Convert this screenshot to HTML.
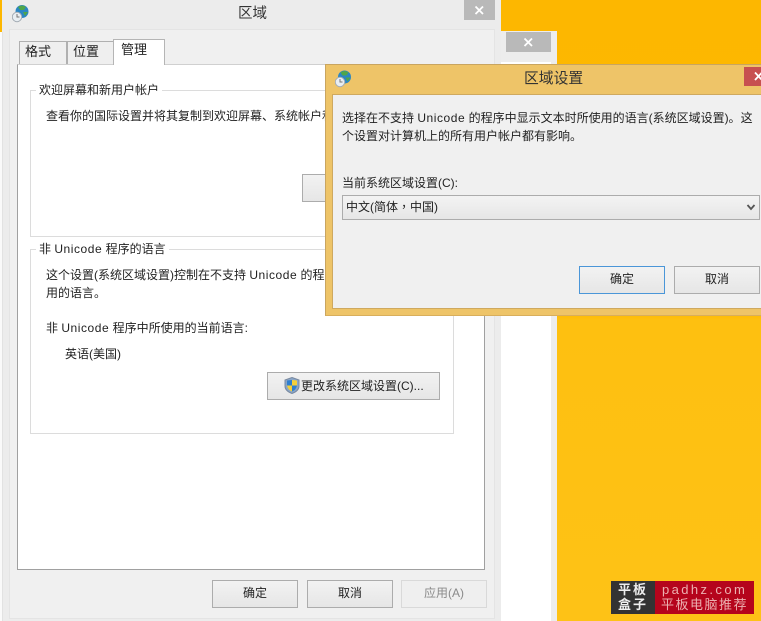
<!DOCTYPE html>
<html><head><meta charset="utf-8"><style>
html,body{margin:0;padding:0}
body{width:761px;height:621px;overflow:hidden;position:relative;background:linear-gradient(180deg,#fdb700 0,#fdb900 312px,#fec010 320px,#fec216 621px);font-family:"Liberation Sans","Noto Sans CJK SC",sans-serif;font-size:12px;color:#222}
div,span,svg{position:absolute;box-sizing:border-box}
b{font-weight:normal;letter-spacing:.55px}
i{font-style:normal;font-family:"Noto Sans CJK TC",sans-serif}
.t{white-space:nowrap;line-height:16px;height:16px}
.btn{background:linear-gradient(#f2f2f2,#e6e6e6);border:1px solid #acacac;text-align:center;line-height:25px;color:#222}
</style></head><body>
<!-- second window behind -->
<div style="left:501px;top:31px;width:56px;height:590px;background:#ededed"></div>
<div style="left:506px;top:32px;width:45px;height:20px;background:#b9b9b9"></div>
<svg style="left:522px;top:36px" width="13" height="13" viewBox="0 0 13 13"><path d="M2.500 2.500L10 10M10 2.500L2.500 10" stroke="#fff" stroke-width="1.800"/></svg>
<div style="left:501px;top:62px;width:50px;height:559px;background:#fff"></div>
<!-- main window -->
<div style="left:2px;top:0;width:499px;height:621px;background:#ececec"></div>
<div style="left:0;top:32px;width:3px;height:589px;background:#fafafa"></div>
<div style="left:2px;top:32px;width:1px;height:589px;background:#e2e2e2"></div>
<div style="left:9px;top:29px;width:486px;height:590px;background:#f0f0f0;border:1px solid #e4e4e4"></div>
<div style="left:464px;top:0;width:31px;height:20px;background:#b9b9b9"></div>
<svg style="left:473px;top:4px" width="13" height="13" viewBox="0 0 13 13"><path d="M2.500 2.500L10 10M10 2.500L2.500 10" stroke="#fff" stroke-width="1.800"/></svg>
<svg style="left:12px;top:5px" width="17" height="18" viewBox="0 0 17 18"><circle cx="10" cy="6.500" r="6.500" fill="#2b86c4"/><path d="M6 2Q10 -1 14 2L12 5L8 5ZM11 7L16 7L13 11Z" fill="#4fa64a"/><circle cx="5" cy="12" r="4.700" fill="#e9eef2" stroke="#a5adb5"/><path d="M5 9V12H7.500" stroke="#777" fill="none"/></svg>
<span class="t" style="left:238px;top:6px;font-size:14.500px;color:#333">区域</span>
<!-- tabs -->
<div style="left:17px;top:64px;width:468px;height:506px;background:#fff;border:1px solid #a0a0a0;border-top-color:#d0d0d0"></div>
<div style="left:19px;top:41px;width:48px;height:23px;background:#efefef;border:1px solid #b0b0b0;border-bottom:0"></div>
<div style="left:67px;top:41px;width:47px;height:23px;background:#efefef;border:1px solid #b0b0b0;border-bottom:0"></div>
<div style="left:113px;top:39px;width:52px;height:26px;background:#fff;border:1px solid #b5b5b5;border-bottom:0"></div>
<span class="t" style="left:25px;top:44px;font-size:13px">格式</span>
<span class="t" style="left:73px;top:44px;font-size:13px">位置</span>
<span class="t" style="left:121px;top:42px;font-size:13px">管理</span>
<!-- group 1 -->
<div style="left:30px;top:90px;width:424px;height:147px;border:1px solid #dcdcdc"></div>
<span class="t" style="left:36px;top:82px;background:#fff;padding:0 3px;font-size:12px">欢迎屏幕和新用户帐户</span>
<span class="t" style="left:46px;top:108px">查看你的国际设置并将其复制到欢迎屏幕、系统帐户和新用户帐户。</span>
<div class="btn" style="left:302px;top:174px;width:120px;height:28px"></div>
<!-- group 2 -->
<div style="left:30px;top:249px;width:424px;height:185px;border:1px solid #dcdcdc"></div>
<span class="t" style="left:36px;top:241px;background:#fff;padding:0 3px">非 <b>Unicode</b> 程序的语言</span>
<span class="t" style="left:46px;top:267px">这个设置(系统区域设置)控制在不支持 <b>Unicode</b> 的程序中显示文本时所使</span>
<span class="t" style="left:46px;top:285px">用的语言。</span>
<span class="t" style="left:46px;top:320px">非 <b>Unicode</b> 程序中所使用的当前语言:</span>
<span class="t" style="left:65px;top:346px">英语(美国)</span>
<div class="btn" style="left:267px;top:372px;width:173px;height:28px"></div>
<svg style="left:284px;top:377px" width="16" height="17" viewBox="0 0 16 17"><path d="M8 .5L15 3V9Q15 14 8 16.500Q1 14 1 9V3Z" fill="#8aa6c8" stroke="#7a8aa0"/><path d="M8 3V8.500H3V3.500Z" fill="#2f7fd0"/><path d="M8 3L13 3.500V8.500H8Z" fill="#f4d03a"/><path d="M3 8.500H8V14.500Q4 13 3 8.500Z" fill="#f4d03a"/><path d="M8 8.500H13Q12 13 8 14.500Z" fill="#2f7fd0"/></svg>
<span class="t" style="left:301px;top:378px">更改系统区域设置(C)...</span>
<!-- bottom buttons -->
<div class="btn" style="left:212px;top:580px;width:86px;height:28px">确定</div>
<div class="btn" style="left:307px;top:580px;width:86px;height:28px">取消</div>
<div class="btn" style="left:401px;top:580px;width:86px;height:28px;background:#efefef;border-color:#d9d9d9;color:#8a8a8a">应用(A)</div>
<!-- dialog -->
<div style="left:325px;top:64px;width:436px;height:252px;background:#eec468;border:1px solid #c9a560;border-bottom-color:#d8ae5c;border-right:0"></div>
<div style="left:332px;top:94px;width:429px;height:215px;background:#f0f0f0;border:1px solid #cfa95f;border-right:0"></div>
<div style="left:744px;top:67px;width:17px;height:19px;background:#c75050"></div>
<svg style="left:754px;top:70px" width="7" height="13" viewBox="0 0 7 13"><path d="M1 2.500L8 10M8 2.500L1 10" stroke="#fff" stroke-width="1.800"/></svg>
<svg style="left:335px;top:70px" width="17" height="18" viewBox="0 0 17 18"><circle cx="9.500" cy="7" r="6.500" fill="#2b86c4"/><path d="M5.500 2.500Q9.500 -.5 13.500 2.500L11.500 5.500L7.500 5.500ZM10.500 7.500L15.500 7.500L12.500 11.500Z" fill="#4fa64a"/><circle cx="5" cy="12" r="4.700" fill="#e9eef2" stroke="#a5adb5"/><path d="M5 9V12H7.500" stroke="#777" fill="none"/></svg>
<span class="t" style="left:524px;top:71px;font-size:14.800px;color:#333">区域设置</span>
<span class="t" style="left:342px;top:110px">选择在不支持 <b>Unicode</b> 的程序中显示文本时所使用的语言(系统区域设置)。这</span>
<span class="t" style="left:342px;top:128px">个设置对计算机上的所有用户帐户都有影响。</span>
<span class="t" style="left:342px;top:175px">当前系统区域设置(C):</span>
<div style="left:342px;top:195px;width:418px;height:25px;background:linear-gradient(#f3f3f3,#e6e6e6);border:1px solid #acacac"></div>
<span class="t" style="left:346px;top:199px">中文(简体<i>，</i>中国)</span>
<svg style="left:746px;top:203px" width="10" height="9" viewBox="0 0 10 9"><path d="M1.500 2L5 6L8.500 2" stroke="#555" stroke-width="1.800" fill="none"/></svg>
<div class="btn" style="left:579px;top:266px;width:86px;height:28px;border-color:#4a96d8">确定</div>
<div class="btn" style="left:674px;top:266px;width:86px;height:28px">取消</div>
<!-- logo -->
<div style="left:611px;top:581px;width:44px;height:33px;background:#333"></div>
<div style="left:655px;top:581px;width:99px;height:33px;background:#b5041c"></div>
<span class="t" style="left:618px;top:582px;font-size:13px;line-height:15px;color:#eee;letter-spacing:2px;font-weight:bold">平板</span>
<span class="t" style="left:618px;top:597px;font-size:13px;line-height:15px;color:#eee;letter-spacing:2px;font-weight:bold">盒子</span>
<span class="t" style="left:662px;top:582px;font-size:13px;line-height:15px;color:#ecb0b0;letter-spacing:2.400px">padhz.com</span>
<span class="t" style="left:661px;top:597px;font-size:13px;line-height:15px;color:#ecb0b0;letter-spacing:1.500px">平板电脑推荐</span>
</body></html>
